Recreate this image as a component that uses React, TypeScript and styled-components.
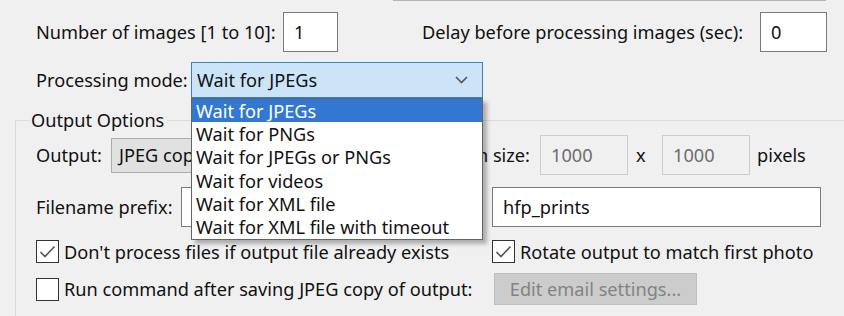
import React from "react";
import styled, { createGlobalStyle } from "styled-components";

const GlobalStyle = createGlobalStyle`
  body {
    margin: 0;
    background: #f0f0f0;
    font-family: "Noto Sans", "DejaVu Sans", sans-serif;
    font-size: 18.2px;
    color: #111;
  }
`;

const Window = styled.div`
  position: relative;
  width: 844px;
  height: 316px;
  overflow: hidden;
  background: #f0f0f0;
`;

const TopRule = styled.div`
  margin-left: 393px;
  width: 433px;
  height: 1px;
  background: #b4b4b4;
`;

const Row = styled.div<{ $top: number; $height: number; $left?: number }>`
  display: flex;
  align-items: center;
  margin-top: ${(p) => p.$top}px;
  height: ${(p) => p.$height}px;
  padding-left: ${(p) => p.$left ?? 36}px;
`;

const Label = styled.span<{ $width?: number; $gap?: number; $align?: string; $pad?: number }>`
  flex: none;
  box-sizing: border-box;
  width: ${(p) => (p.$width ? `${p.$width}px` : "auto")};
  margin-left: ${(p) => p.$gap ?? 0}px;
  padding-left: ${(p) => p.$pad ?? 0}px;
  text-align: ${(p) => p.$align ?? "left"};
  white-space: nowrap;
  line-height: 1;
`;

const TextBox = styled.div<{ $width: number; $gap?: number; $disabled?: boolean }>`
  flex: none;
  box-sizing: border-box;
  width: ${(p) => p.$width}px;
  height: 40px;
  margin-left: ${(p) => p.$gap ?? 0}px;
  display: flex;
  align-items: center;
  padding-left: 10px;
  background: ${(p) => (p.$disabled ? "#f0f0f0" : "#ffffff")};
  border: 1px solid ${(p) => (p.$disabled ? "#cccccc" : "#7a7a7a")};
  color: ${(p) => (p.$disabled ? "#6d6d6d" : "#111")};
  white-space: nowrap;
  overflow: hidden;
`;

const ComboWrap = styled.div`
  position: relative;
  flex: none;
`;

const Combo = styled.div`
  box-sizing: border-box;
  width: 292px;
  height: 36px;
  display: flex;
  align-items: center;
  justify-content: space-between;
  padding: 0 14px 0 5px;
  background: #cce4f7;
  border: 1px solid #3d7fbf;
`;

const DropList = styled.ul`
  position: absolute;
  top: 100%;
  left: 0;
  z-index: 5;
  box-sizing: border-box;
  width: 292px;
  margin: 0;
  padding: 0;
  list-style: none;
  background: #ffffff;
  border: 1px solid #646464;
  box-shadow: 4px 4px 4px rgba(0, 0, 0, 0.28);
`;

const DropItem = styled.li<{ $selected?: boolean }>`
  height: 23.3px;
  display: flex;
  align-items: center;
  padding-left: 4px;
  white-space: nowrap;
  background: ${(p) => (p.$selected ? "#3278d2" : "transparent")};
  color: ${(p) => (p.$selected ? "#ffffff" : "#111")};
`;

const GroupBox = styled.fieldset`
  margin: 13px -40px 0 15px;
  padding: 0;
  height: 240px;
  border: 1px solid #dcdcdc;
  border-right: none;
`;

const Legend = styled.legend`
  margin-left: 14px;
  padding: 0 3px 0 1px;
  line-height: 1;
`;

const PlainCombo = styled.div`
  flex: none;
  box-sizing: border-box;
  width: 110px;
  height: 35px;
  display: flex;
  align-items: center;
  padding-left: 7px;
  background: #e1e1e1;
  border: 1px solid #adadad;
  white-space: nowrap;
  overflow: hidden;
`;

const CheckLabel = styled.label<{ $width?: number }>`
  flex: none;
  display: flex;
  align-items: center;
  gap: 5px;
  width: ${(p) => (p.$width ? `${p.$width}px` : "auto")};
  white-space: nowrap;
  line-height: 1;
`;

const Box = styled.span`
  flex: none;
  box-sizing: border-box;
  width: 23px;
  height: 23px;
  display: flex;
  align-items: center;
  justify-content: center;
  background: #ffffff;
  border: 1px solid #333333;
`;

const DisabledButton = styled.div`
  flex: none;
  box-sizing: border-box;
  width: 203px;
  height: 32px;
  display: flex;
  align-items: center;
  justify-content: center;
  background: #cccccc;
  border: 1px solid #bfbfbf;
  color: #838383;
  white-space: nowrap;
`;

const Chevron = () => (
  <svg width="13" height="8" viewBox="0 0 13 8">
    <polyline points="1,1 6.5,6.5 12,1" fill="none" stroke="#555" strokeWidth="1.6" />
  </svg>
);

const Checkbox = ({ checked }: { checked?: boolean }) => (
  <Box>
    {checked && (
      <svg width="17" height="14" viewBox="0 0 17 14">
        <polyline points="1.5,7 6,11.5 15.5,1.5" fill="none" stroke="#555" strokeWidth="1.6" />
      </svg>
    )}
  </Box>
);

const modes = [
  "Wait for JPEGs",
  "Wait for PNGs",
  "Wait for JPEGs or PNGs",
  "Wait for videos",
  "Wait for XML file",
  "Wait for XML file with timeout",
];

export default function App() {
  return (
    <Window>
      <GlobalStyle />
      <TopRule />
      <Row $top={11} $height={40}>
        <Label $width={247}>Number of images [1 to 10]:</Label>
        <TextBox $width={55}>1</TextBox>
        <Label $width={338} $gap={84}>Delay before processing images (sec):</Label>
        <TextBox $width={67}>0</TextBox>
      </Row>
      <Row $top={10} $height={36}>
        <Label $width={155}>Processing mode:</Label>
        <ComboWrap>
          <Combo>
            <span>Wait for JPEGs</span>
            <Chevron />
          </Combo>
          <DropList>
            {modes.map((m, i) => (
              <DropItem key={m} $selected={i === 0}>
                {m}
              </DropItem>
            ))}
          </DropList>
        </ComboWrap>
      </Row>
      <GroupBox>
        <Legend>Output Options</Legend>
        <Row $top={6} $height={40} $left={20}>
          <Label $width={75}>Output:</Label>
          <PlainCombo>JPEG copy</PlainCombo>
          <Label $width={289} $gap={20} $align="right">
            Scale to screen size:
          </Label>
          <TextBox $width={88} $gap={10} $disabled>
            1000
          </TextBox>
          <Label $width={34} $pad={8}>
            x
          </Label>
          <TextBox $width={88} $disabled>
            1000
          </TextBox>
          <Label $gap={7}>pixels</Label>
        </Row>
        <Row $top={12} $height={40} $left={20}>
          <Label $width={145}>Filename prefix:</Label>
          <TextBox $width={300} />
          <TextBox $width={329} $gap={11}>
            hfp_prints
          </TextBox>
        </Row>
        <Row $top={13} $height={23} $left={20}>
          <CheckLabel $width={456}>
            <Checkbox checked />
            Don't process files if output file already exists
          </CheckLabel>
          <CheckLabel>
            <Checkbox checked />
            Rotate output to match first photo
          </CheckLabel>
        </Row>
        <Row $top={10} $height={32} $left={20}>
          <CheckLabel $width={458}>
            <Checkbox />
            Run command after saving JPEG copy of output:
          </CheckLabel>
          <DisabledButton>Edit email settings...</DisabledButton>
        </Row>
      </GroupBox>
    </Window>
  );
}
